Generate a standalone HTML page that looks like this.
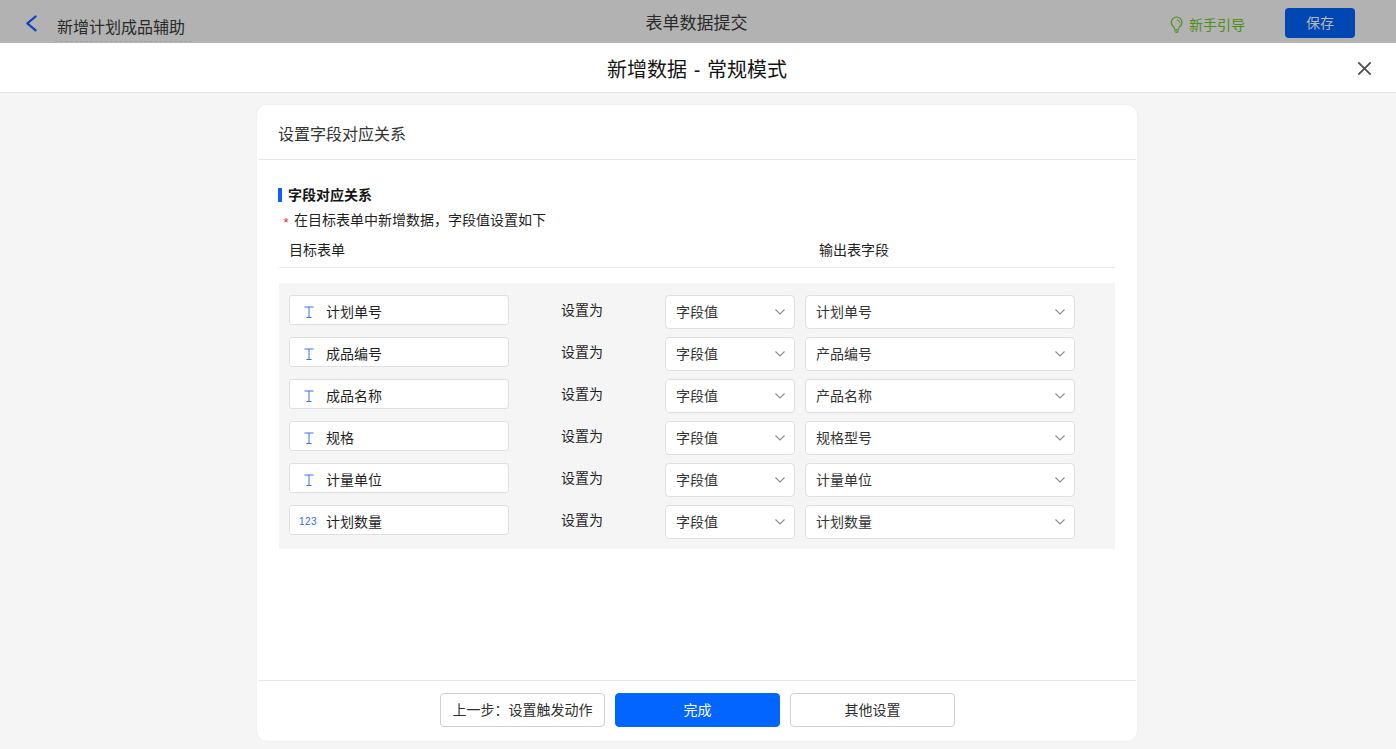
<!DOCTYPE html>
<html lang="zh-CN">
<head>
<meta charset="utf-8">
<title>表单数据提交</title>
<style>
*{box-sizing:border-box;margin:0;padding:0}
html,body{width:1396px;height:749px;overflow:hidden;background:#f5f5f5}
body{position:relative;font-family:"Liberation Sans","Noto Sans CJK SC",sans-serif;font-size:14px;color:#1f1f1f}
.abs{position:absolute;white-space:nowrap}
/* top bar (dimmed) */
#topbar{left:0;top:0;width:1396px;height:43px;background:#b2b2b2;border-bottom:2px solid #b5b5b5}
#back{left:24px;top:13px;width:16px;height:20px}
#appname{left:57px;top:16px;font-size:16px;line-height:24px;color:#2a2a2a}
#appline{left:55px;top:41px;width:137px;height:0;border-top:1px dashed #a2a2a2}
#ttl{left:0;width:1393px;top:12px;text-align:center;font-size:17px;line-height:24px;color:#2a2a2a}
#guide{left:1189px;top:14px;font-size:14px;line-height:22px;color:#4d9014}
#bulb{left:1168px;top:15px;width:17px;height:20px}
#save{left:1285px;top:8px;width:70px;height:30px;border-radius:4px;background:#0047b3;color:#b9b9b9;text-align:center;line-height:30px;font-size:14px}
/* modal header */
#mhead{left:0;top:43px;width:1396px;height:50px;background:#fff;border-bottom:1px solid #e4e4e4}
#mtitle{left:0;width:1394px;top:56px;word-spacing:1px;text-align:center;font-size:20px;line-height:28px;color:#141414}
#close{left:1356px;top:60px;width:17px;height:17px}
/* card */
#card{left:257px;top:105px;width:880px;height:636px;background:#fff;border-radius:10px;box-shadow:0 0 3px rgba(0,0,0,0.05)}
#chead{left:278px;top:123px;font-size:16px;line-height:24px;color:#333}
.hline{height:1px;background:#e8e8e8}
#bar{left:278px;top:188px;width:4px;height:14px;background:#0d62ff}
#sec{left:288px;top:184px;font-weight:bold;line-height:22px;color:#141414}
#star{left:283.500px;top:212px;color:#f0222e;font-size:13px;line-height:22px}
#desc{left:294px;top:209px;line-height:22px;color:#1f1f1f}
.th{top:239px;line-height:22px;color:#1f1f1f}
#gray{left:279px;top:283px;width:836px;height:266px;background:#f5f5f5}
.fld{left:289px;width:220px;height:30px;background:#fff;border:1px solid #e0e0e0;border-radius:3px;line-height:28px}
.fld span{position:absolute;left:36px;top:2px}
.fld svg{position:absolute;left:14px;top:10px}
.fld i{position:absolute;left:9px;top:1.500px;font-style:normal;font-size:10px;color:#2f6bff;letter-spacing:0.500px}
.set{left:561px;line-height:22px}
.sel{height:34px;background:#fff;border:1px solid #e0e0e0;border-radius:4px;line-height:32px;padding-left:10px;color:#333}
.sel svg{position:absolute;right:8.300px;top:12px}
.s1{left:665px;width:130px}
.s2{left:805px;width:270px}
.btn{top:693px;width:165px;height:34px;border-radius:4px;text-align:center;line-height:32px;background:#fff;border:1px solid #cfcfcf;color:#2e2e2e}
#done{background:#0265ff;border-color:#0265ff;color:#fff}
</style>
</head>
<body>
<div class="abs" id="topbar"></div>
<svg class="abs" id="back" viewBox="0 0 16 20"><path d="M11.600 3.500 L3.300 10.400 L11.600 17.300" fill="none" stroke="#1240c4" stroke-width="2.200" stroke-linecap="round" stroke-linejoin="round"/></svg>
<div class="abs" id="appname">新增计划成品辅助</div>
<div class="abs" id="appline"></div>
<div class="abs" id="ttl">表单数据提交</div>
<svg class="abs" id="bulb" viewBox="0 0 17 20"><path d="M6.500 13.700V13.300C6.500 12.400 5.800 11.900 5 11.200A5.300 5.300 0 1 1 12.200 11.200C11.400 11.900 10.700 12.400 10.700 13.300V13.700" fill="none" stroke="#4d9014" stroke-width="1.200"/><path d="M6 14.700h5.200M6.300 16.100h4.600M7.300 17.400h2.600" stroke="#4d9014" stroke-width="0.900" fill="none"/><path d="M8.900 4.600a3.200 3.200 0 0 1 2.600 3.200" stroke="#4d9014" stroke-width="1" fill="none"/></svg>
<div class="abs" id="guide">新手引导</div>
<div class="abs" id="save">保存</div>

<div class="abs" id="mhead"></div>
<div class="abs" id="mtitle">新增数据 - 常规模式</div>
<svg class="abs" id="close" viewBox="0 0 17 17"><path d="M2.300 2.300 L14.700 14.700 M14.700 2.300 L2.300 14.700" stroke="#4a4a4a" stroke-width="1.700" fill="none"/></svg>

<div class="abs" id="card"></div>
<div class="abs" id="chead">设置字段对应关系</div>
<div class="abs hline" style="left:258px;top:159px;width:878px"></div>
<div class="abs" id="bar"></div>
<div class="abs" id="sec">字段对应关系</div>
<div class="abs" id="star">*</div>
<div class="abs" id="desc">在目标表单中新增数据，字段值设置如下</div>
<div class="abs th" style="left:289px">目标表单</div>
<div class="abs th" style="left:819px">输出表字段</div>
<div class="abs hline" style="left:279px;top:267px;width:836px"></div>
<div class="abs" id="gray"></div>

<!-- rows -->
<div id="rows">
<div class="abs fld" style="top:295px"><svg width="10" height="13" viewBox="0 0 10 13"><path d="M0.500 1h9M5 1v10.500M2.500 11.500h5" fill="none" stroke="#3a6ff0" stroke-width="1"/></svg><span>计划单号</span></div>
<div class="abs set" style="top:299px">设置为</div>
<div class="abs sel s1" style="top:295px">字段值<svg width="12" height="8" viewBox="0 0 12 8"><path d="M1.500 1.500L6 6l4.500-4.500" fill="none" stroke="#8c8c8c" stroke-width="1.100"/></svg></div>
<div class="abs sel s2" style="top:295px">计划单号<svg width="12" height="8" viewBox="0 0 12 8"><path d="M1.500 1.500L6 6l4.500-4.500" fill="none" stroke="#8c8c8c" stroke-width="1.100"/></svg></div>
<div class="abs fld" style="top:337px"><svg width="10" height="13" viewBox="0 0 10 13"><path d="M0.500 1h9M5 1v10.500M2.500 11.500h5" fill="none" stroke="#3a6ff0" stroke-width="1"/></svg><span>成品编号</span></div>
<div class="abs set" style="top:341px">设置为</div>
<div class="abs sel s1" style="top:337px">字段值<svg width="12" height="8" viewBox="0 0 12 8"><path d="M1.500 1.500L6 6l4.500-4.500" fill="none" stroke="#8c8c8c" stroke-width="1.100"/></svg></div>
<div class="abs sel s2" style="top:337px">产品编号<svg width="12" height="8" viewBox="0 0 12 8"><path d="M1.500 1.500L6 6l4.500-4.500" fill="none" stroke="#8c8c8c" stroke-width="1.100"/></svg></div>
<div class="abs fld" style="top:379px"><svg width="10" height="13" viewBox="0 0 10 13"><path d="M0.500 1h9M5 1v10.500M2.500 11.500h5" fill="none" stroke="#3a6ff0" stroke-width="1"/></svg><span>成品名称</span></div>
<div class="abs set" style="top:383px">设置为</div>
<div class="abs sel s1" style="top:379px">字段值<svg width="12" height="8" viewBox="0 0 12 8"><path d="M1.500 1.500L6 6l4.500-4.500" fill="none" stroke="#8c8c8c" stroke-width="1.100"/></svg></div>
<div class="abs sel s2" style="top:379px">产品名称<svg width="12" height="8" viewBox="0 0 12 8"><path d="M1.500 1.500L6 6l4.500-4.500" fill="none" stroke="#8c8c8c" stroke-width="1.100"/></svg></div>
<div class="abs fld" style="top:421px"><svg width="10" height="13" viewBox="0 0 10 13"><path d="M0.500 1h9M5 1v10.500M2.500 11.500h5" fill="none" stroke="#3a6ff0" stroke-width="1"/></svg><span>规格</span></div>
<div class="abs set" style="top:425px">设置为</div>
<div class="abs sel s1" style="top:421px">字段值<svg width="12" height="8" viewBox="0 0 12 8"><path d="M1.500 1.500L6 6l4.500-4.500" fill="none" stroke="#8c8c8c" stroke-width="1.100"/></svg></div>
<div class="abs sel s2" style="top:421px">规格型号<svg width="12" height="8" viewBox="0 0 12 8"><path d="M1.500 1.500L6 6l4.500-4.500" fill="none" stroke="#8c8c8c" stroke-width="1.100"/></svg></div>
<div class="abs fld" style="top:463px"><svg width="10" height="13" viewBox="0 0 10 13"><path d="M0.500 1h9M5 1v10.500M2.500 11.500h5" fill="none" stroke="#3a6ff0" stroke-width="1"/></svg><span>计量单位</span></div>
<div class="abs set" style="top:467px">设置为</div>
<div class="abs sel s1" style="top:463px">字段值<svg width="12" height="8" viewBox="0 0 12 8"><path d="M1.500 1.500L6 6l4.500-4.500" fill="none" stroke="#8c8c8c" stroke-width="1.100"/></svg></div>
<div class="abs sel s2" style="top:463px">计量单位<svg width="12" height="8" viewBox="0 0 12 8"><path d="M1.500 1.500L6 6l4.500-4.500" fill="none" stroke="#8c8c8c" stroke-width="1.100"/></svg></div>
<div class="abs fld" style="top:505px"><i>123</i><span>计划数量</span></div>
<div class="abs set" style="top:509px">设置为</div>
<div class="abs sel s1" style="top:505px">字段值<svg width="12" height="8" viewBox="0 0 12 8"><path d="M1.500 1.500L6 6l4.500-4.500" fill="none" stroke="#8c8c8c" stroke-width="1.100"/></svg></div>
<div class="abs sel s2" style="top:505px">计划数量<svg width="12" height="8" viewBox="0 0 12 8"><path d="M1.500 1.500L6 6l4.500-4.500" fill="none" stroke="#8c8c8c" stroke-width="1.100"/></svg></div>
</div>

<div class="abs hline" style="left:258px;top:680px;width:878px"></div>
<div class="abs btn" style="left:440px">上一步：设置触发动作</div>
<div class="abs btn" id="done" style="left:615px">完成</div>
<div class="abs btn" style="left:790px">其他设置</div>
</body>
</html>
